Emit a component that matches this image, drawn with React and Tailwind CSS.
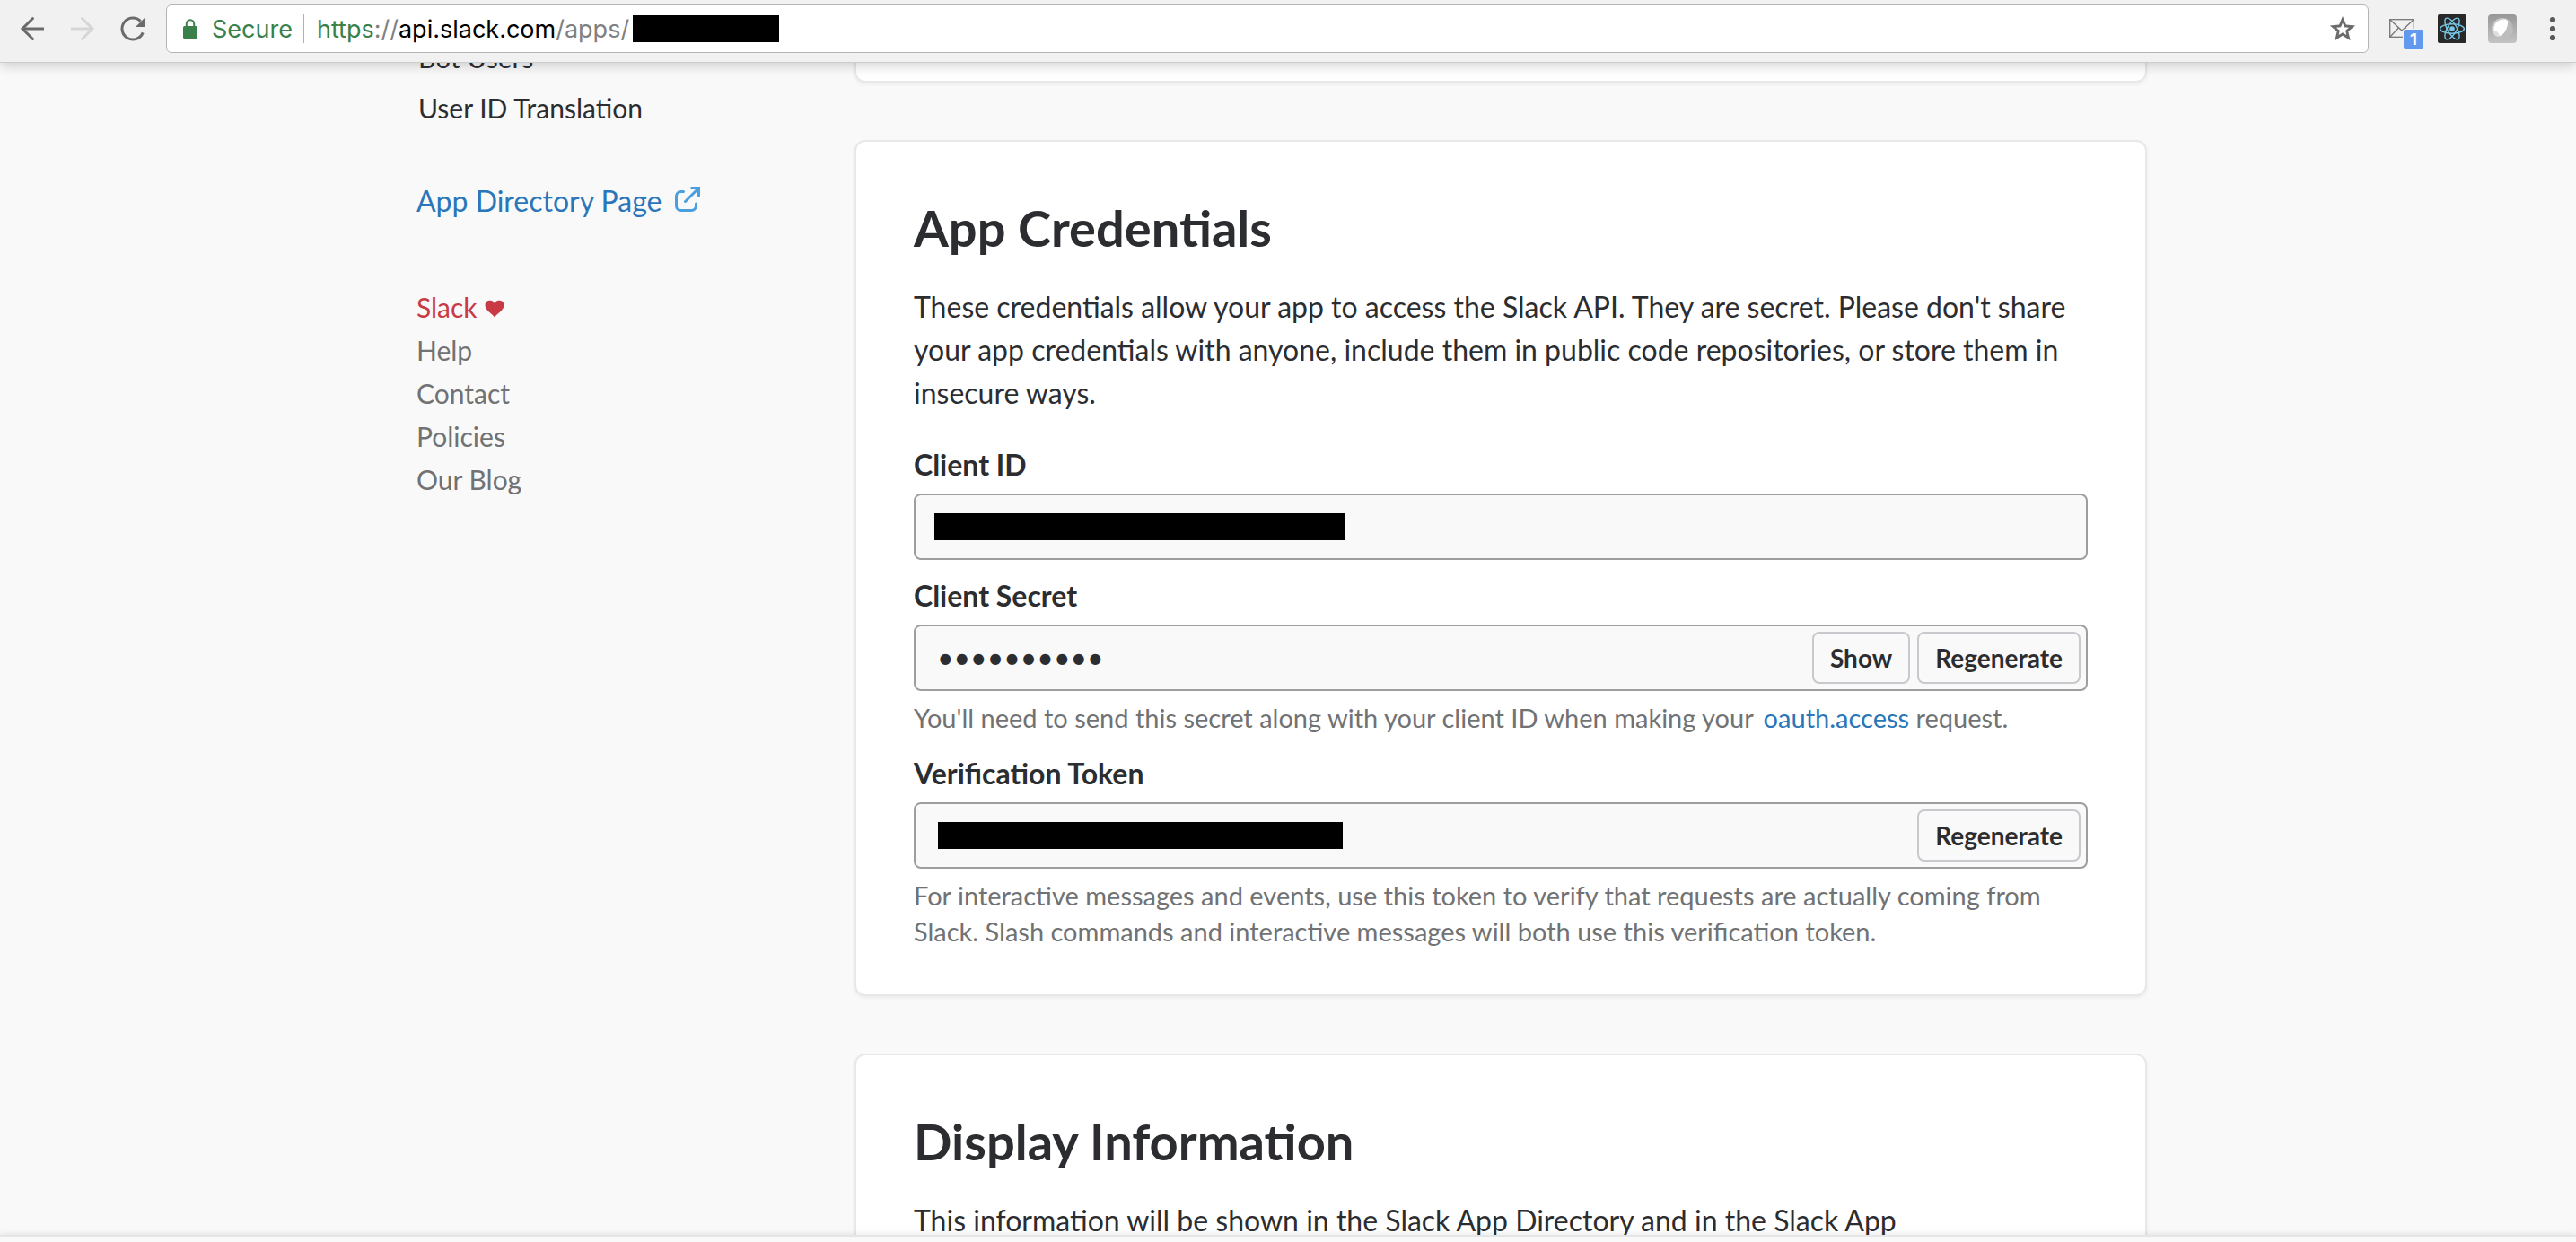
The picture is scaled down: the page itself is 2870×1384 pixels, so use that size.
import React from "react";

const TOKEN_HINT =
  "For interactive messages and events, use this token to verify that requests are actually coming from Slack. Slash commands and interactive messages will both use this verification token.";

function BackIcon({ className = "" }) {
  return (
    <svg className={`h-8 w-8 ${className}`} viewBox="0 0 32 32" fill="none" stroke="currentColor" strokeWidth="3" aria-hidden="true">
      <path d="M29 16H5" />
      <path d="M16.5 4.5 5 16l11.5 11.5" strokeLinecap="round" />
    </svg>
  );
}

function ReloadIcon() {
  return (
    <svg className="h-8 w-8" viewBox="0 0 32 32" fill="none" aria-hidden="true">
      <path d="M27.2 20.4A12 12 0 1 1 24.6 7.6" stroke="currentColor" strokeWidth="3" />
      <path d="M30 3v11H19z" fill="currentColor" />
    </svg>
  );
}

function LockIcon() {
  return (
    <svg className="h-[22px] w-4" viewBox="0 0 16 22" fill="none" aria-hidden="true">
      <rect x="0" y="8" width="16" height="14" rx="1.5" fill="currentColor" />
      <path d="M3.8 9V5.4a4.2 4.2 0 0 1 8.4 0V9" stroke="currentColor" strokeWidth="2" />
    </svg>
  );
}

function StarIcon() {
  return (
    <svg className="h-8 w-8" viewBox="0 0 32 32" fill="none" aria-hidden="true">
      <path
        fillRule="evenodd"
        fill="currentColor"
        d="M16 2l3.9 9.6 10.3.8-7.9 6.7 2.4 10.1L16 23.8l-8.7 5.4 2.4-10.1-7.9-6.7 10.3-.8zM16 9.6l-1.900 4.700-5.100.4 3.900 3.300-1.200 5L16 20.300l4.300 2.700-1.200-5 3.900-3.300-5.100-.4z"
      />
    </svg>
  );
}

function MailIcon() {
  return (
    <svg className="h-[22px] w-7" viewBox="0 0 28 22" fill="none" stroke="#777777" strokeWidth="1.3" aria-hidden="true">
      <rect x="0.7" y="0.7" width="26.6" height="19.6" />
      <path d="M0.7 0.7 14 13 27.3 0.7M0.7 20.3 10.5 10M27.3 20.3 17.5 10" />
    </svg>
  );
}

function ReactIcon() {
  return (
    <svg className="h-8 w-8" viewBox="0 0 32 32" fill="none" aria-hidden="true">
      <rect width="32" height="32" rx="2" fill="#282828" />
      <g stroke="#79c9ea" strokeWidth="1.4">
        <ellipse cx="16" cy="16" rx="13.4" ry="5.2" />
        <ellipse cx="16" cy="16" rx="13.4" ry="5.2" transform="rotate(60 16 16)" />
        <ellipse cx="16" cy="16" rx="13.4" ry="5.2" transform="rotate(120 16 16)" />
      </g>
      <circle cx="16" cy="16" r="2.8" fill="#79c9ea" />
    </svg>
  );
}

function OrbIcon() {
  return (
    <svg className="h-8 w-8" viewBox="0 0 32 32" fill="none" aria-hidden="true">
      <defs>
        <linearGradient id="orb-tile" x1="0" y1="0" x2="0" y2="1">
          <stop offset="0" stopColor="#979797" />
          <stop offset="1" stopColor="#c4c4c4" />
        </linearGradient>
        <linearGradient id="orb-ball" x1="0" y1="0" x2="1" y2="1">
          <stop offset="0" stopColor="#d6d6d6" />
          <stop offset="1" stopColor="#a6a6a6" />
        </linearGradient>
      </defs>
      <rect width="32" height="32" rx="4" fill="url(#orb-tile)" />
      <circle cx="16" cy="16" r="12" fill="url(#orb-ball)" />
      <path d="M28 16A12 12 0 0 1 8 25c8 1 13-5 14.5-15z" fill="#bdbdbd" />
      <path d="M7 20C4.5 12 10 5.5 18 5.5c3.5 0 4.5 1.5 4 5C21 18.5 16 25 10 24.5 8.5 24 7.5 22 7 20z" fill="#ffffff" />
      <path d="M5 18c3-1 6 1 8 6-3 1.5-7-1-8-6z" fill="#dedede" />
    </svg>
  );
}

function DotsIcon() {
  return (
    <svg className="h-8 w-2" viewBox="0 0 8 32" fill="currentColor" aria-hidden="true">
      <circle cx="4" cy="6" r="3.1" />
      <circle cx="4" cy="16" r="3.1" />
      <circle cx="4" cy="26" r="3.1" />
    </svg>
  );
}

function ExternalIcon() {
  return (
    <svg className="mb-1 h-7 w-7 text-[#4a9fdf]" viewBox="0 0 28 28" fill="none" stroke="currentColor" strokeWidth="3" strokeLinecap="round" aria-hidden="true">
      <path d="M9.5 5.5H6.5a5 5 0 0 0-5 5V21.5a5 5 0 0 0 5 5h12a5 5 0 0 0 5-5V19" />
      <path d="M11.5 16.5 26 2" />
      <path d="M18.5 1.5h8v8.5" strokeLinejoin="miter" />
    </svg>
  );
}

function HeartIcon() {
  return (
    <svg className="mt-1 h-5 w-[22px]" viewBox="0 0 22 20" fill="currentColor" aria-hidden="true">
      <path d="M11 19.5C8.5 15.5 0.5 12 0.5 6a5.4 5.4 0 0 1 10.5-1.7A5.4 5.4 0 0 1 21.5 6c0 6-8 9.5-10.5 13.5z" />
    </svg>
  );
}

function Toolbar() {
  return (
    <header className="relative z-10 flex h-[70px] shrink-0 items-center border-b border-[#cdcdcd] bg-[#f1f1f1] pr-[22px] pb-[5px] pl-5 font-['Inter',sans-serif] text-[#6b6b6b] shadow-[0_4px_12px_rgba(0,0,0,0.16)]">
      <nav className="flex shrink-0 items-center gap-6" aria-label="Browser navigation">
        <button type="button" aria-label="Back"><BackIcon /></button>
        <button type="button" aria-label="Forward" disabled className="text-[#d6d6d6]"><BackIcon className="rotate-180" /></button>
        <button type="button" aria-label="Reload"><ReloadIcon /></button>
      </nav>
      <div className="ml-[21px] flex h-[54px] min-w-0 flex-1 items-center rounded-md border border-[#b5b5b5] bg-white pr-3 pl-[18px] text-[27px] leading-8 whitespace-nowrap">
        <span className="text-[#39804a]"><LockIcon /></span>
        <span className="ml-4 pt-0.5 text-[#39804a]">Secure</span>
        <span className="ml-3 h-8 w-px bg-[#b0b0b0]" />
        <span className="ml-3.5 pt-0.5 text-[#808080]">
          <span className="text-[#39804a]">https</span>://<span className="text-black">api.slack.com</span>/apps/
        </span>
        <span className="ml-1 h-[30px] w-[163px] bg-black" aria-label="Hidden app ID" role="img" />
        <button type="button" aria-label="Bookmark this page" className="ml-auto"><StarIcon /></button>
      </div>
      <div className="ml-[23px] flex shrink-0 items-center text-[#5a5a5a]">
        <button type="button" aria-label="Mail, 1 unread" className="relative">
          <MailIcon />
          <span className="absolute top-3 left-4 flex size-[22px] items-center justify-center rounded-xs bg-[#6199ef] text-lg leading-none font-bold text-white ring-1 ring-[#f1f1f1]">1</span>
        </button>
        <button type="button" aria-label="React Developer Tools" className="ml-[26px]"><ReactIcon /></button>
        <button type="button" aria-label="Extension" className="ml-6"><OrbIcon /></button>
        <button type="button" aria-label="Menu" className="ml-9"><DotsIcon /></button>
      </div>
    </header>
  );
}

function Sidebar() {
  return (
    <aside className="w-[488px] shrink-0 text-[30px] leading-[48px]">
      <nav className="flex flex-col items-start pl-0.5 leading-[56px]">
        <a href="#bot-users">Bot Users</a>
        <a href="#user-id-translation">User ID Translation</a>
      </nav>
      <a href="#directory" className="mt-[52px] flex items-center gap-3.5 text-[32px] text-[#2a76b9]">
        App Directory Page
        <ExternalIcon />
      </a>
      <nav className="mt-[70px] flex flex-col items-start text-[#717274]">
        <a href="#slack" className="flex items-center gap-2 text-[#c93a44]">
          Slack
          <HeartIcon />
        </a>
        <a href="#help">Help</a>
        <a href="#contact">Contact</a>
        <a href="#policies">Policies</a>
        <a href="#blog">Our Blog</a>
      </nav>
    </aside>
  );
}

function Card({ title, children }) {
  return (
    <section className="rounded-xl border-2 border-[#e8e8e8] bg-white px-16 pt-16 pb-12 shadow-[0_2px_4px_rgba(0,0,0,0.06)]">
      <h2 className="text-[56px] leading-[64px] font-bold">{title}</h2>
      {children}
    </section>
  );
}

function FieldButton({ children }) {
  return (
    <button type="button" className="h-[58px] shrink-0 rounded-lg border-2 border-[#c8c8cd] px-[18px] text-[28px] font-bold">
      {children}
    </button>
  );
}

function Field({ id, label, type = "text", value = "", redaction, hint, actions = [] }) {
  return (
    <div className="mt-4">
      <label htmlFor={id} className="block font-bold">{label}</label>
      <div className="mt-2 flex h-[74px] items-center gap-2 rounded-lg border-2 border-[#9e9ea0] bg-[#f9f9f9] pr-1.5">
        {redaction}
        <input id={id} type={type} readOnly defaultValue={value} className="h-full min-w-0 flex-1 bg-transparent px-6 pb-0.5 text-[32px] outline-none" />
        {actions.map((a) => <FieldButton key={a}>{a}</FieldButton>)}
      </div>
      {hint && <p className="mt-2.5 pb-0.5 text-[29px] leading-10 text-[#717274]">{hint}</p>}
    </div>
  );
}

export default function App() {
  return (
    <div className="flex h-screen flex-col overflow-hidden bg-[#f9f9f9] font-['Lato',sans-serif] text-[#2c2d30]">
      <Toolbar />
      <main className="min-h-0 flex-1 overflow-hidden pr-3.5">
        <div className="mx-auto -mt-[34px] flex max-w-[1928px]">
          <Sidebar />
          <div className="flex min-w-0 flex-1 flex-col gap-16 text-[32px] leading-[48px]">
            <div className="h-14 rounded-xl border-2 border-[#e8e8e8] bg-white shadow-[0_2px_4px_rgba(0,0,0,0.06)]" />
            <Card title="App Credentials">
              <p className="mt-8 mb-8">
                These credentials allow your app to access the Slack API. They are secret. Please don't share your app
                credentials with anyone, include them in public code repositories, or store them in insecure ways.
              </p>
              <Field id="client-id" label="Client ID" redaction={<span className="ml-[21px] h-[30px] w-[457px] bg-black" />} />
              <Field
                id="client-secret"
                label="Client Secret"
                type="password"
                value="0123456789"
                actions={["Show", "Regenerate"]}
                hint={
                  <>
                    You'll need to send this secret along with your client ID when making your{" "}
                    <a href="#oauth" className="ml-1 text-[#2a76b9]">oauth.access</a> request.
                  </>
                }
              />
              <Field
                id="verification-token"
                label="Verification Token"
                redaction={<span className="ml-[25px] h-[30px] w-[451px] bg-black" />}
                actions={["Regenerate"]}
                hint={TOKEN_HINT}
              />
            </Card>
            <Card title="Display Information">
              <p className="mt-8">This information will be shown in the Slack App Directory and in the Slack App</p>
            </Card>
          </div>
        </div>
      </main>
      <footer className="relative h-2 shrink-0 border-t-2 border-[#e6e6e6] bg-[#f9f9f9] shadow-[0_-2px_6px_rgba(0,0,0,0.08)]" />
    </div>
  );
}
